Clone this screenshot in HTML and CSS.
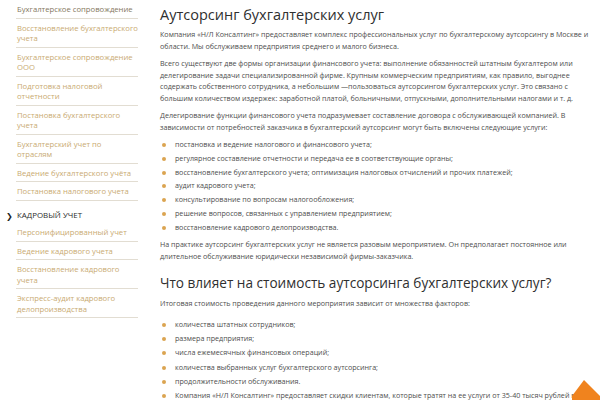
FILE: index.html
```html
<!DOCTYPE html>
<html lang="ru">
  <head>
    <meta charset="UTF-8" />
    <meta name="viewport" content="width=device-width, initial-scale=1.0" />
    <title>Аутсорсинг бухгалтерских услуг</title>
    <link rel="stylesheet" href="styles.css">
  </head>
  <body>
    <div class="page">
      <!-- Меню раздела -->
      <aside class="sidebar">
        <ul class="menu">
          <li><a href="#" class="current">Бухгалтерское сопровождение</a></li>
          <li><a href="#">Восстановление бухгалтерского учета</a></li>
          <li><a href="#">Бухгалтерское сопровождение ООО</a></li>
          <li><a href="#">Подготовка налоговой отчетности</a></li>
          <li><a href="#">Постановка бухгалтерского учета</a></li>
          <li><a href="#">Бухгалтерский учет по отраслям</a></li>
          <li><a href="#">Ведение бухгалтерского учёта</a></li>
          <li><a href="#">Постановка налогового учета</a></li>
        </ul>
        <div class="menu-title">КАДРОВЫЙ УЧЕТ</div>
        <ul class="menu">
          <li><a href="#">Персонифицированный учет</a></li>
          <li><a href="#">Ведение кадрового учета</a></li>
          <li><a href="#">Восстановление кадрового учета</a></li>
          <li><a href="#">Экспресс-аудит кадрового делопроизводства</a></li>
        </ul>
      </aside>

      <!-- Текст страницы -->
      <main class="content">
        <h1>Аутсорсинг бухгалтерских услуг</h1>
        <p>Компания «Н/Л Консалтинг» предоставляет комплекс профессиональных услуг по бухгалтерскому аутсорсингу в Москве и области. Мы обслуживаем предприятия среднего и малого бизнеса.</p>
        <p>Всего существуют две формы организации финансового учета: выполнение обязанностей штатным бухгалтером или делегирование задачи специализированной фирме. Крупным коммерческим предприятиям, как правило, выгоднее содержать собственного сотрудника, а небольшим —пользоваться аутсорсингом бухгалтерских услуг. Это связано с большим количеством издержек: заработной платой, больничными, отпускными, дополнительными налогами и т. д.</p>
        <p>Делегирование функции финансового учета подразумевает составление договора с обслуживающей компанией. В зависимости от потребностей заказчика в бухгалтерский аутсорсинг могут быть включены следующие услуги:</p>
        <ul class="dots">
          <li>постановка и ведение налогового и финансового учета;</li>
          <li>регулярное составление отчетности и передача ее в соответствующие органы;</li>
          <li>восстановление бухгалтерского учета; оптимизация налоговых отчислений и прочих платежей;</li>
          <li>аудит кадрового учета;</li>
          <li>консультирование по вопросам налогообложения;</li>
          <li>решение вопросов, связанных с управлением предприятием;</li>
          <li>восстановление кадрового делопроизводства.</li>
        </ul>
        <p>На практике аутсорсинг бухгалтерских услуг не является разовым мероприятием. Он предполагает постоянное или длительное обслуживание юридически независимой фирмы-заказчика.</p>
        <h2>Что влияет на стоимость аутсорсинга бухгалтерских услуг?</h2>
        <p>Итоговая стоимость проведения данного мероприятия зависит от множества факторов:</p>
        <ul class="dots factors">
          <li>количества штатных сотрудников;</li>
          <li>размера предприятия;</li>
          <li>числа ежемесячных финансовых операций;</li>
          <li>количества выбранных услуг бухгалтерского аутсорсинга;</li>
          <li>продолжительности обслуживания.</li>
          <li class="nowrap">Компания «Н/Л Консалтинг» предоставляет скидки клиентам, которые тратят на ее услуги от 35-40 тысяч рублей в месяц.</li>
        </ul>
      </main>
    </div>

    <!-- Кнопка «наверх» -->
    <a href="#" class="to-top" aria-label="Наверх">
      <svg width="28" height="20" viewBox="0 0 28 20">
        <polygon points="12,0 0,16 0,20 28,20 28,16" fill="#f0831e" />
      </svg>
    </a>
  </body>
</html>
```

FILE: styles.css
```css
/* Базовые стили */
html,
body {
  margin: 0;
  padding: 0;
  background-color: #fff;
  font-family: "Open Sans", "DejaVu Sans", sans-serif;
  color: #4d4d4d;
  overflow: hidden;
}

.page {
  display: flex;
  gap: 22px;
  padding-left: 16px;
}

/* Боковое меню */
.sidebar {
  flex: 0 0 122px;
}

.menu {
  list-style: none;
  margin: 0;
  padding: 0;
}

.menu li {
  border-bottom: 1px solid #e2ddd2;
}

.menu a {
  display: block;
  padding: 4px 0 3px 1px;
  font-size: 7.7px;
  line-height: 10.5px;
  color: #c9aa72;
  text-decoration: none;
}

.menu a.current {
  color: #85775e;
}

.menu-title {
  position: relative;
  margin: 9.5px 0 2px;
  padding-left: 1px;
  font-size: 7.9px;
  line-height: 11px;
  color: #2b2b2b;
}

.menu-title::before {
  content: "❯";
  position: absolute;
  left: -10px;
  top: 0;
  font-size: 8px;
  font-weight: bold;
  color: #222;
}

/* Основной текст */
.content {
  flex: 0 0 435px;
}

.content h1,
.content h2 {
  margin: 0;
  font-weight: normal;
  line-height: 18px;
  color: #2f2f2f;
}

.content h1 {
  font-size: 14.5px;
  padding-top: 6px;
  margin-bottom: 5px;
}

.content h2 {
  font-size: 13.6px;
  margin: 12px 0 6px;
}

.content p {
  margin: 0 0 6px;
  font-size: 7.15px;
  line-height: 11.5px;
}

.dots {
  list-style: none;
  margin: 5px 0 6px;
  padding: 0;
}

.dots li {
  position: relative;
  padding-left: 15px;
  margin-bottom: 2.3px;
  font-size: 7.15px;
  line-height: 11.5px;
}

.dots li::before {
  content: "";
  position: absolute;
  left: 2px;
  top: 4px;
  width: 4px;
  height: 4px;
  border-radius: 50%;
  background-color: #dba451;
}

.factors {
  margin-top: 9.5px;
}

.factors li {
  margin-bottom: 2.6px;
}

.dots li.nowrap {
  white-space: nowrap;
}

/* Кнопка наверх */
.to-top {
  position: fixed;
  right: 0;
  bottom: 0;
  line-height: 0;
}
```
